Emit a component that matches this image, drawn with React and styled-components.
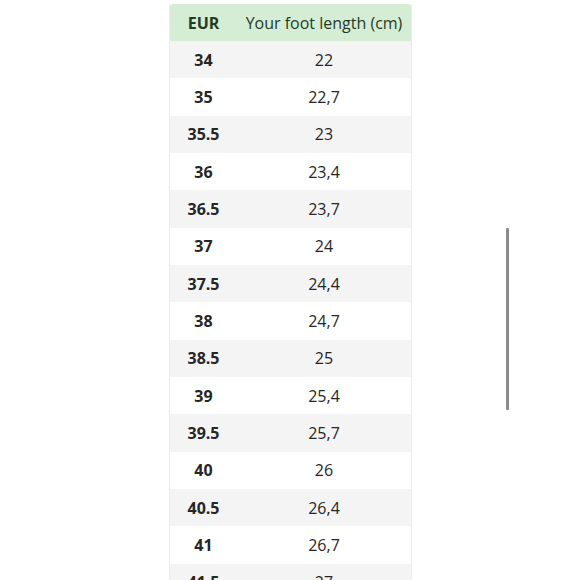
import React from "react";
import styled, { createGlobalStyle } from "styled-components";

const Global = createGlobalStyle`
  html, body { margin: 0; padding: 0; background: #ffffff; }
  body { font-family: "Open Sans", "Noto Sans", sans-serif; width: 580px; height: 580px; overflow: hidden; }
`;

const Page = styled.div`
  width: 580px;
  height: 580px;
  position: relative;
  overflow: hidden;
  padding: 4px 0 0 169px;
  box-sizing: border-box;
`;

const Table = styled.div`
  width: 243px;
  display: flex;
  flex-direction: column;
  border-left: 1px solid #ececec;
  border-right: 1px solid #ececec;
  box-sizing: border-box;
`;

const Row = styled.div`
  display: grid;
  grid-template-columns: 67px 1fr;
  height: ${(p) => (p.$head ? "37px" : "37.33px")};
  align-items: center;
  background: ${(p) => (p.$head ? "#d5edd5" : p.$alt ? "#f4f4f4" : "#ffffff")};
  border-radius: ${(p) => (p.$head ? "3px 3px 0 0" : "0")};
`;

const Cell = styled.div`
  text-align: center;
  font-size: 16px;
  line-height: 20px;
  font-weight: ${(p) => (p.$bold ? 700 : 400)};
  color: ${(p) => (p.$head ? "#1f3b26" : "#262626")};
`;

const Scrollbar = styled.div`
  position: absolute;
  left: 506px;
  top: 228px;
  width: 3px;
  height: 182px;
  background: #8a8a8a;
  border-radius: 1px;
`;

const data = [
  ["34", "22"],
  ["35", "22,7"],
  ["35.5", "23"],
  ["36", "23,4"],
  ["36.5", "23,7"],
  ["37", "24"],
  ["37.5", "24,4"],
  ["38", "24,7"],
  ["38.5", "25"],
  ["39", "25,4"],
  ["39.5", "25,7"],
  ["40", "26"],
  ["40.5", "26,4"],
  ["41", "26,7"],
  ["41.5", "27"],
];

export default function App() {
  return (
    <>
      <Global />
      <Page>
        <Table>
          <Row $head>
            <Cell $head $bold>EUR</Cell>
            <Cell $head>Your foot length (cm)</Cell>
          </Row>
          {data.map(([eur, cm], i) => (
            <Row key={eur} $alt={i % 2 === 0}>
              <Cell $bold>{eur}</Cell>
              <Cell>{cm}</Cell>
            </Row>
          ))}
        </Table>
        <Scrollbar />
      </Page>
    </>
  );
}
